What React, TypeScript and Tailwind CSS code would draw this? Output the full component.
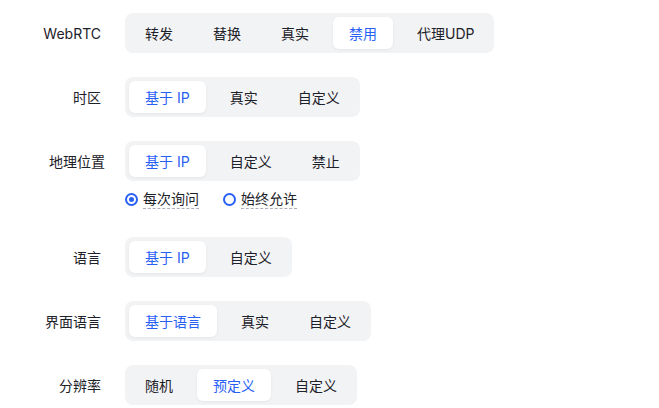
import React from "react";

type SegProps = { items: string[]; active: number };

function Segmented({ items, active }: SegProps) {
  return (
    <div className="inline-flex h-10 items-center gap-2 rounded-lg bg-[#f2f3f5] p-1">
      {items.map((it, i) => (
        <div
          key={it}
          className={
            i === active
              ? "flex h-8 items-center rounded-md bg-white px-4 text-[14px] text-[#2860f6] shadow-[0_1px_3px_rgba(0,0,0,0.06)]"
              : "flex h-8 items-center rounded-md px-4 text-[14px] text-[#1d2129]"
          }
        >
          {it}
        </div>
      ))}
    </div>
  );
}

function Row({
  label,
  children,
  labelClass = "pr-6",
}: {
  label: string;
  children: React.ReactNode;
  labelClass?: string;
}) {
  return (
    <div className="mb-6 flex items-start">
      <div
        className={`flex h-10 w-[125px] shrink-0 items-center justify-end text-[14px] text-[#1d2129] ${labelClass}`}
      >
        {label}
      </div>
      <div className="flex flex-col">{children}</div>
    </div>
  );
}

function Radio({ label, checked }: { label: string; checked: boolean }) {
  return (
    <div className="flex items-center gap-[5px]">
      <span
        className={
          checked
            ? "flex h-[13px] w-[13px] items-center justify-center rounded-full border-2 border-[#2860f6]"
            : "h-[13px] w-[13px] rounded-full border-2 border-[#2860f6]"
        }
      >
        {checked && <span className="h-[5px] w-[5px] rounded-full bg-[#2860f6]" />}
      </span>
      <span className="border-b border-dashed border-[#a9aeb8] text-[14px] leading-[19px] text-[#1d2129]">
        {label}
      </span>
    </div>
  );
}

export default function App() {
  return (
    <div
      className="h-[408px] w-[659px] overflow-hidden bg-white pt-[13px]"
      style={{ fontFamily: "Inter, 'Noto Sans CJK SC', sans-serif" }}
    >
      <Row label="WebRTC">
        <Segmented items={["转发", "替换", "真实", "禁用", "代理UDP"]} active={3} />
      </Row>
      <Row label="时区">
        <Segmented items={["基于 IP", "真实", "自定义"]} active={0} />
      </Row>
      <Row label="地理位置" labelClass="pr-5">
        <Segmented items={["基于 IP", "自定义", "禁止"]} active={0} />
        <div className="flex h-8 items-start gap-6 pt-[8px]">
          <Radio label="每次询问" checked />
          <Radio label="始终允许" checked={false} />
        </div>
      </Row>
      <Row label="语言">
        <Segmented items={["基于 IP", "自定义"]} active={0} />
      </Row>
      <Row label="界面语言">
        <Segmented items={["基于语言", "真实", "自定义"]} active={0} />
      </Row>
      <Row label="分辨率">
        <Segmented items={["随机", "预定义", "自定义"]} active={1} />
      </Row>
    </div>
  );
}
